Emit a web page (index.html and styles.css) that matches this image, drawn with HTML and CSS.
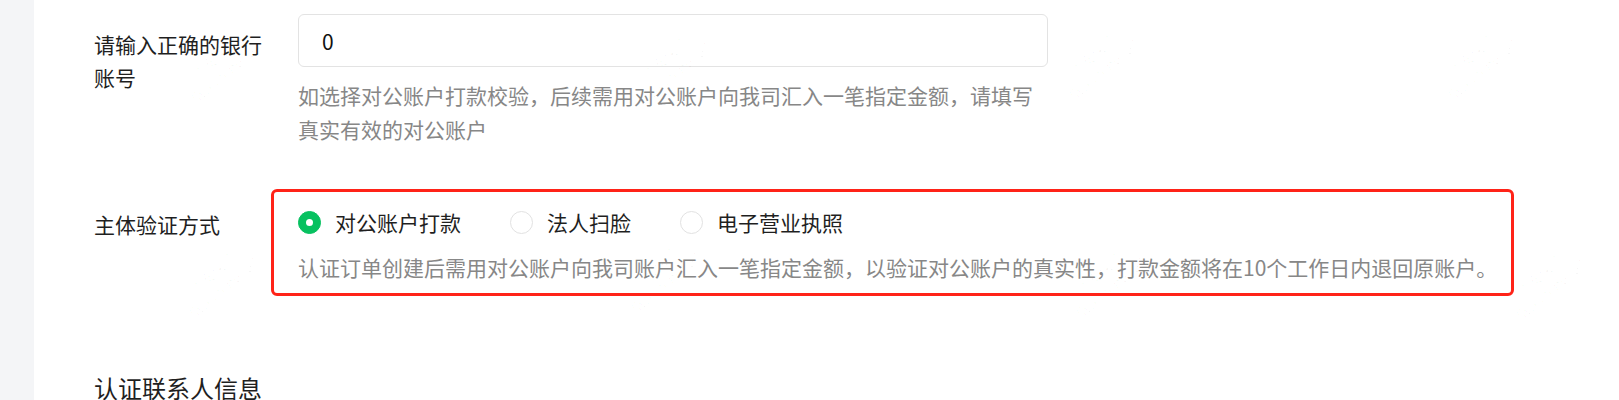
FILE: index.html
```html
<!DOCTYPE html>
<html lang="zh-CN">
<head>
<meta charset="utf-8">
<title>主体认证</title>
<link rel="stylesheet" href="styles.css">
</head>
<body>
<div class="page">
  <aside class="sidebar"></aside>
  <main class="content">
    <div class="form-row row-account">
      <label class="form-label">请输入正确的银行账号</label>
      <div class="form-control">
        <div class="input">0</div>
        <p class="help">如选择对公账户打款校验，后续需用对公账户向我司汇入一笔指定金额，请填写真实有效的对公账户</p>
      </div>
    </div>
    <div class="form-row row-verify">
      <label class="form-label">主体验证方式</label>
      <div class="form-control highlight">
        <div class="radio-group">
          <span class="radio checked"><span class="circle"><span class="dot"></span></span>对公账户打款</span>
          <span class="radio"><span class="circle"></span>法人扫脸</span>
          <span class="radio"><span class="circle"></span>电子营业执照</span>
        </div>
        <p class="desc">认证订单创建后需用对公账户向我司账户汇入一笔指定金额，以验证对公账户的真实性，打款金额将在10个工作日内退回原账户。</p>
      </div>
    </div>
    <h2 class="section-title">认证联系人信息</h2>
  </main>
  <div class="wm wm-1">众安保险<br>liweigen6962</div>
  <div class="wm wm-2">众安保险<br>liweigen6962</div>
  <div class="wm wm-3">众安保险<br>liweigen6962</div>
  <div class="wm wm-4">众安保险<br>liweigen6962</div>
  <div class="wm wm-5">众安保险<br>liweigen6962</div>
  <div class="wm wm-6">众安保险<br>liweigen6962</div>
  <div class="wm wm-7">众安保险<br>liweigen6962</div>
  <div class="wm wm-8">众安保险<br>liweigen6962</div>
</div>
</body>
</html>
```
FILE: styles.css
```css
html, body {
  margin: 0;
  padding: 0;
  background: #ffffff;
}

body {
  font-family: "Noto Sans CJK SC", "Noto Sans", sans-serif;
  color: #1f1f1f;
  overflow: hidden;
  text-spacing-trim: space-all;
  text-autospace: no-autospace;
}

.page {
  position: relative;
  display: flex;
  min-height: 400px;
}

.sidebar {
  flex: none;
  width: 34px;
  background: #f4f5f7;
}

.content {
  flex: 1;
  padding: 14px 0 0 60px;
}

.form-row {
  display: grid;
  grid-template-columns: 204px 1fr;
  align-items: start;
}

.form-label {
  display: block;
  box-sizing: border-box;
  padding-right: 28px;
  font-size: 21px;
  line-height: 33px;
  color: #1f1f1f;
}

.row-account .form-label {
  margin-top: 13.5px;
}

.input {
  box-sizing: border-box;
  width: 750px;
  height: 53px;
  display: flex;
  align-items: center;
  padding-left: 23px;
  border: 1px solid #e3e3e3;
  border-radius: 6px;
  font-size: 21px;
  color: #111111;
}

.help {
  width: 742px;
  margin: 12px 0 0;
  font-size: 21px;
  line-height: 33.6px;
  color: #878787;
}

.row-verify {
  margin-top: 43px;
}

.row-verify .form-label {
  margin-top: 19px;
}

.highlight {
  box-sizing: border-box;
  width: 1243px;
  margin-left: -27px;
  padding: 13.5px 0 9px 24px;
  border: 3px solid #ff2318;
  border-radius: 6px;
}

.radio-group {
  display: flex;
  align-items: center;
  height: 33px;
}

.radio {
  display: flex;
  align-items: center;
  margin-right: 49px;
  font-size: 21px;
  line-height: 33px;
  color: #1f1f1f;
}

.circle {
  flex: none;
  box-sizing: border-box;
  width: 23px;
  height: 23px;
  margin-right: 14px;
  border: 1px solid #e2e2e2;
  border-radius: 50%;
  background: #ffffff;
  display: flex;
  align-items: center;
  justify-content: center;
}

.radio.checked .circle {
  background: #07c160;
  border-color: #07c160;
}

.dot {
  width: 7px;
  height: 7px;
  border-radius: 50%;
  background: #ffffff;
}

.desc {
  margin: 12px 0 0;
  font-size: 21px;
  line-height: 33.5px;
  color: #878787;
  white-space: nowrap;
}

.section-title {
  margin: 74px 0 0;
  font-size: 24px;
  line-height: 36px;
  font-weight: 400;
  color: #1f1f1f;
}

.wm {
  position: absolute;
  pointer-events: none;
  font-size: 14px;
  line-height: 18px;
  color: rgba(0, 0, 0, 0.028);
  transform: translate(-50%, -50%) rotate(-40deg);
  white-space: nowrap;
  text-align: center;
}

.wm-1 { left: 220px; top: 65px; }
.wm-2 { left: 670px; top: 65px; }
.wm-3 { left: 1098px; top: 62px; }
.wm-4 { left: 1477px; top: 62px; }
.wm-5 { left: 218px; top: 280px; }
.wm-6 { left: 660px; top: 275px; }
.wm-7 { left: 1105px; top: 280px; }
.wm-8 { left: 1545px; top: 282px; }
```
